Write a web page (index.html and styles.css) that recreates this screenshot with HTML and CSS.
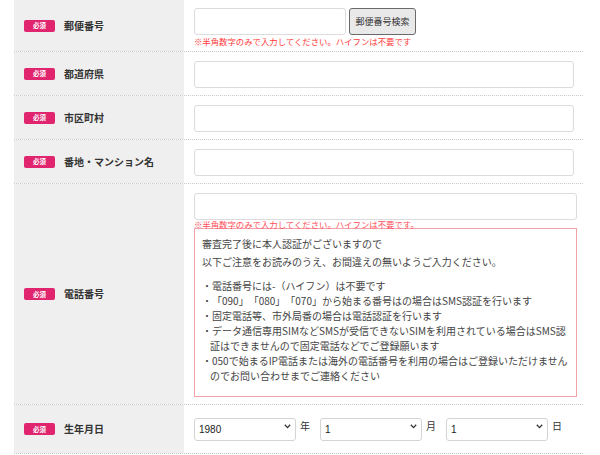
FILE: index.html
```html
<!DOCTYPE html>
<html lang="ja">
<head>
<meta charset="utf-8">
<link rel="stylesheet" href="styles.css">
</head>
<body>
<div class="form">
  <div class="row">
    <div class="label"><span class="badge">必須</span><span class="name">郵便番号</span></div>
    <div class="field field-top">
      <div class="zip-line">
        <input class="input zip" type="text">
        <button class="zip-btn" type="button">郵便番号検索</button>
      </div>
      <p class="note">※半角数字のみで入力してください。ハイフンは不要です</p>
    </div>
  </div>
  <div class="row">
    <div class="label"><span class="badge">必須</span><span class="name">都道府県</span></div>
    <div class="field"><input class="input" type="text"></div>
  </div>
  <div class="row">
    <div class="label"><span class="badge">必須</span><span class="name">市区町村</span></div>
    <div class="field"><input class="input" type="text"></div>
  </div>
  <div class="row">
    <div class="label"><span class="badge">必須</span><span class="name">番地・マンション名</span></div>
    <div class="field"><input class="input" type="text"></div>
  </div>
  <div class="row">
    <div class="label"><span class="badge">必須</span><span class="name">電話番号</span></div>
    <div class="field">
      <input class="input" type="text">
      <p class="note note-tel">※半角数字のみで入力してください。ハイフンは不要です。</p>
      <div class="notice">
        <p class="lead">審査完了後に本人認証がございますので<br>以下ご注意をお読みのうえ、お間違えの無いようご入力ください。</p>
        <ul class="list">
          <li>・電話番号には-（ハイフン）は不要です</li>
          <li>・「090」「080」「070」から始まる番号はの場合はSMS認証を行います</li>
          <li>・固定電話等、市外局番の場合は電話認証を行います</li>
          <li>・データ通信専用SIMなどSMSが受信できないSIMを利用されている場合はSMS認<br>証はできませんので固定電話などでご登録願います</li>
          <li>・050で始まるIP電話または海外の電話番号を利用の場合はご登録いただけません<br>のでお問い合わせまでご連絡ください</li>
        </ul>
      </div>
    </div>
  </div>
  <div class="row">
    <div class="label"><span class="badge">必須</span><span class="name">生年月日</span></div>
    <div class="field date-line">
      <span class="sel-wrap"><select class="sel"><option>1980</option></select><svg class="chev" width="7" height="5" viewBox="0 0 7 5"><path d="M0.8 0.8 L3.5 3.6 L6.2 0.8" fill="none" stroke="#333" stroke-width="1.3"/></svg></span>
      <span class="unit">年</span>
      <span class="sel-wrap"><select class="sel"><option>1</option></select><svg class="chev" width="7" height="5" viewBox="0 0 7 5"><path d="M0.8 0.8 L3.5 3.6 L6.2 0.8" fill="none" stroke="#333" stroke-width="1.3"/></svg></span>
      <span class="unit">月</span>
      <span class="sel-wrap"><select class="sel"><option>1</option></select><svg class="chev" width="7" height="5" viewBox="0 0 7 5"><path d="M0.8 0.8 L3.5 3.6 L6.2 0.8" fill="none" stroke="#333" stroke-width="1.3"/></svg></span>
      <span class="unit">日</span>
    </div>
  </div>
</div>
</body>
</html>
```

FILE: styles.css
```css
* { box-sizing: border-box; }
html, body { margin: 0; padding: 0; background: #fff; }
body {
  font-family: "Noto Sans CJK JP", "Noto Sans", sans-serif;
  color: #333;
  overflow: hidden;
  text-spacing-trim: space-all;
}
.form {
  width: 569px;
  margin-left: 14px;
}
.row {
  display: grid;
  grid-template-columns: 170px 1fr;
  border-bottom: 1px dotted #c8c8c8;
}
.label {
  background: #efefef;
  display: flex;
  align-items: center;
  padding-left: 10px;
}
.badge {
  display: inline-flex;
  align-items: center;
  justify-content: center;
  width: 31px;
  height: 12px;
  border-radius: 2px;
  background: #e0246e;
  color: #fff;
  font-size: 6.5px;
  font-weight: bold;
  line-height: 1;
  margin-right: 9px;
}
.name {
  font-size: 10px;
  font-weight: bold;
  color: #333;
  line-height: 1;
}
.field {
  padding: 9px 9px 7px 10px;
}
.field-top {
  padding-top: 8px;
  padding-bottom: 5px;
}
.input {
  display: block;
  width: 100%;
  height: 27px;
  border: 1px solid #dcdcdc;
  border-radius: 3px;
  background: #fff;
  margin: 0;
  padding: 0 6px;
  font-size: 10px;
}
.zip-line {
  display: flex;
  gap: 3px;
}
.input.zip {
  width: 152px;
}
.zip-btn {
  width: 67px;
  height: 27px;
  margin: 0;
  padding: 0;
  border: 1px solid #6a6a6a;
  border-radius: 3px;
  background: #e9e9e9;
  color: #333;
  font-family: "Noto Sans CJK JP", sans-serif;
  font-size: 9px;
  line-height: 1;
}
.note {
  margin: 0;
  height: 11px;
  padding-top: 1px;
  font-size: 8.4px;
  line-height: 10px;
  color: #ff3a3a;
  white-space: nowrap;
}
.note-tel {
  height: 8px;
  padding-top: 0;
  line-height: 8px;
  color: #ff4d57;
}
.notice {
  border: 1px solid #f4a2a8;
  padding: 6px 8px 13px 7px;
  font-size: 10px;
  color: #444;
}
.lead {
  margin: 0;
  line-height: 18px;
}
.list {
  list-style: none;
  margin: 7px 0 0;
  padding: 0 0 0 8px;
  line-height: 15px;
}
.list li {
  text-indent: -8px;
  white-space: nowrap;
}
.date-line {
  display: flex;
  align-items: center;
  padding-bottom: 16px;
}
.sel-wrap {
  position: relative;
  display: inline-block;
  width: 102px;
  height: 23px;
}
.sel {
  appearance: none;
  -webkit-appearance: none;
  width: 100%;
  height: 23px;
  margin: 0;
  border: 1px solid #d4d4d4;
  border-radius: 3px;
  background: #fff;
  padding: 0 0 0 4px;
  font-family: "Liberation Sans", Arial, sans-serif;
  font-size: 10px;
  color: #222;
}
.chev {
  position: absolute;
  right: 5px;
  top: 10px;
}
.unit {
  font-size: 10px;
  color: #333;
  margin: 0 10px 0 4px;
}
.unit:last-child { margin-right: 0; }
```
